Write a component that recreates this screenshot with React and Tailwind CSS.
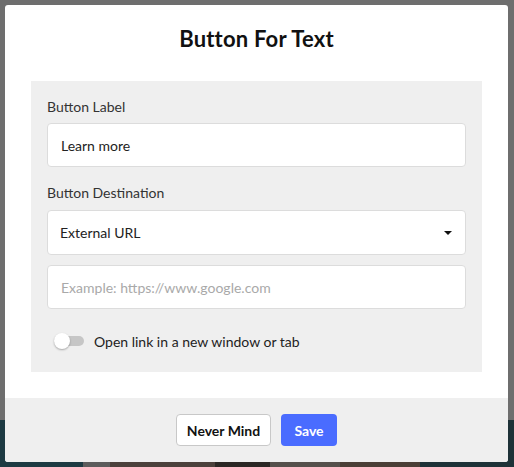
import React, { useState } from 'react';

function App() {
  const [label, setLabel] = useState('Learn more');
  const [url, setUrl] = useState('');
  const [newTab, setNewTab] = useState(false);

  return (
    <div className="relative w-[514px] h-[467px] overflow-hidden font-['Lato',sans-serif]">
      {/* page behind the dimmed overlay */}
      <div className="flex flex-col h-full">
        <div className="h-[420px] bg-[#6e6e6e]" />
        <div className="flex flex-1">
          <div className="w-[83px] bg-[#1d3a42]" />
          <div className="w-[27px] bg-[#5c5c5c]" />
          <div className="w-[105px] bg-[#4b403b]" />
          <div className="w-[55px] bg-[#2b2724]" />
          <div className="w-[70px] bg-[#55504b]" />
          <div className="w-[80px] bg-[#4a3e36]" />
          <div className="flex-1 bg-[#1e3238]" />
        </div>
      </div>

      <div className="absolute left-[5px] top-[5px] w-[503px] h-[457px] bg-white rounded-[3px] overflow-hidden flex flex-col">
        <h1 className="text-center text-[22px] font-bold text-[#111] pt-[17px] h-[76px] tracking-[0.2px]">
          Button For Text
        </h1>

        <div className="mx-[26px] bg-[#efefef] px-4 pt-[16px] h-[291px]">
          <label className="block text-[14px] text-[#333] leading-5">Button Label</label>
          <input
            value={label}
            onChange={(e) => setLabel(e.target.value)}
            className="mt-[6px] block w-full h-[44px] px-[13px] bg-white border border-[#dcdcdc] rounded-[4px] text-[14px] text-[#222] outline-none"
          />

          <label className="block mt-[16px] text-[14px] text-[#333] leading-5">Button Destination</label>
          <div className="mt-[7px] flex items-center justify-between h-[45px] pl-3 pr-[13px] bg-white border border-[#dcdcdc] rounded-[4px] text-[14px] text-[#222]">
            <span>External URL</span>
            <span className="w-0 h-0 border-l-[4px] border-r-[4px] border-t-[4px] border-l-transparent border-r-transparent border-t-[#111]" />
          </div>

          <input
            value={url}
            onChange={(e) => setUrl(e.target.value)}
            placeholder="Example: https://www.google.com"
            className="mt-[10px] block w-full h-[44px] px-[13px] bg-white border border-[#dcdcdc] rounded-[4px] text-[14px] text-[#222] placeholder:text-[#a9a9a9] outline-none"
          />

          <div className="flex items-center h-5 mt-[22px] ml-[7px]">
            <button
              type="button"
              onClick={() => setNewTab(!newTab)}
              className={newTab
                ? 'relative w-[30px] h-[10px] rounded-full bg-[#9aaaff]'
                : 'relative w-[30px] h-[10px] rounded-full bg-[#c6c6c6]'}
            >
              <span
                className={newTab
                  ? 'absolute top-[-3px] right-0 w-[16px] h-[16px] rounded-full bg-[#4a6cff] shadow-[0_1px_2px_rgba(0,0,0,0.3)]'
                  : 'absolute top-[-3px] left-0 w-[16px] h-[16px] rounded-full bg-white shadow-[0_1px_2px_rgba(0,0,0,0.3)]'}
              />
            </button>
            <span className="ml-[10px] text-[14px] text-[#222]">Open link in a new window or tab</span>
          </div>
        </div>

        <div className="mt-[26px] flex-1 bg-[#efefef] flex items-center justify-center gap-[10px]">
          <button className="w-[95px] h-[32px] bg-white border border-[#c8c8c8] rounded-[4px] text-[14px] font-bold text-[#111]">
            Never Mind
          </button>
          <button className="w-[56px] h-[32px] bg-[#4a6cff] rounded-[4px] text-[14px] font-bold text-white">
            Save
          </button>
        </div>
      </div>
    </div>
  );
}

export default App;
